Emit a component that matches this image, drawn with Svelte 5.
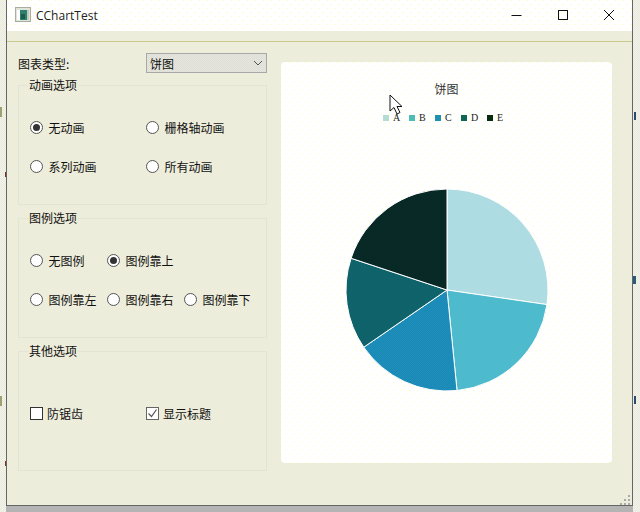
<script>
  const animOptions = [
    { label: '无动画', on: true },
    { label: '栅格轴动画', on: false },
    { label: '系列动画', on: false },
    { label: '所有动画', on: false }
  ];
  const legendOptions = [
    { label: '无图例', on: false },
    { label: '图例靠上', on: true },
    { label: '', on: false, blank: true },
    { label: '图例靠左', on: false },
    { label: '图例靠右', on: false },
    { label: '图例靠下', on: false }
  ];
  const otherOptions = [
    { label: '防锯齿', on: false },
    { label: '显示标题', on: true }
  ];

  // end angle of each slice, clockwise from 12 o'clock
  const slices = [
    { name: 'A', end: 98.3, c1: '#a8dcf5', c2: '#b5dcd0' },
    { name: 'B', end: 174.3, c1: '#4cb8e4', c2: '#4fbcb5' },
    { name: 'C', end: 235.5, c1: '#1a88c0', c2: '#2090b0' },
    { name: 'D', end: 288.3, c1: '#0f5f80', c2: '#0f6655' },
    { name: 'E', end: 360, c1: '#06283c', c2: '#0a2a10' }
  ];

  // bits of the desktop showing either side of the window
  const marks = [
    { x: 0, y: 107, w: 2, h: 10, c: '#a0a070' },
    { x: 0, y: 396, w: 2, h: 10, c: '#a0a070' },
    { x: 5, y: 172, w: 1, h: 5, c: '#7a3030' },
    { x: 5, y: 461, w: 1, h: 5, c: '#7a3030' },
    { x: 634, y: 112, w: 2, h: 8, c: '#2a4a70' },
    { x: 633, y: 276, w: 3, h: 8, c: '#2a5a80' },
    { x: 634, y: 396, w: 2, h: 8, c: '#2a4a70' }
  ];

  const cx = 166, cy = 166, r = 101;

  function point(deg) {
    const a = (deg * Math.PI) / 180;
    return (cx + r * Math.sin(a)).toFixed(2) + ' ' + (cy - r * Math.cos(a)).toFixed(2);
  }

  function slicePath(i) {
    const start = i === 0 ? 0 : slices[i - 1].end;
    const end = slices[i].end;
    const large = end - start > 180 ? 1 : 0;
    return `M${cx} ${cy}L${point(start)}A${r} ${r} 0 ${large} 1 ${point(end - 0.001)}Z`;
  }
</script>

<div class="desktop">
  {#each marks as m}
    <span class="mark" style="left: {m.x}px; top: {m.y}px; width: {m.w}px; height: {m.h}px; background: {m.c}"></span>
  {/each}

  <div class="window">
    <header class="titlebar">
      <svg class="appicon" width="16" height="16" viewBox="0 0 16 16">
        <rect x="0.5" y="0.5" width="15" height="14" fill="#dfe3d8" stroke="#a9ad9f" />
        <rect x="2" y="3" width="3" height="10" fill="#fff" />
        <rect x="5" y="3" width="7" height="10" fill="#2f7f6f" />
        <rect x="6" y="7" width="4" height="5" fill="#1c5a4c" />
        <rect x="12" y="3" width="2" height="10" fill="#c4c8b8" />
      </svg>
      <span class="wintitle">CChartTest</span>
      <div class="winbtns">
        <svg width="46" height="20" viewBox="0 0 46 20"><path d="M17.5 10.500h10" stroke="#111" fill="none" /></svg>
        <svg width="46" height="20" viewBox="0 0 46 20"><rect x="18.5" y="5.5" width="9" height="9" stroke="#111" fill="none" /></svg>
        <svg width="46" height="20" viewBox="0 0 46 20"><path d="M18 5l10 10M28 5l-10 10" stroke="#111" fill="none" /></svg>
      </div>
    </header>
    <div class="menubar"></div>

    <div class="content">
      <div class="leftcol">
        <div class="typerow">
          <span class="typelabel">图表类型:</span>
          <div class="combo">
            <span>饼图</span>
            <svg width="10" height="6" viewBox="0 0 10 6"><path d="M1 1l4 4 4-4" stroke="#555" fill="none" /></svg>
          </div>
        </div>

        <fieldset>
          <legend>动画选项</legend>
          <div class="opts two">
            {#each animOptions as opt}
              <div class="opt">
                <span class="radio" class:on={opt.on}></span>
                <span>{opt.label}</span>
              </div>
            {/each}
          </div>
        </fieldset>

        <fieldset>
          <legend>图例选项</legend>
          <div class="opts three">
            {#each legendOptions as opt}
              {#if opt.blank}
                <div></div>
              {:else}
                <div class="opt">
                  <span class="radio" class:on={opt.on}></span>
                  <span>{opt.label}</span>
                </div>
              {/if}
            {/each}
          </div>
        </fieldset>

        <fieldset>
          <legend>其他选项</legend>
          <div class="opts two checks">
            {#each otherOptions as opt}
              <div class="opt">
                <span class="check" class:on={opt.on}>
                  {#if opt.on}
                    <svg width="11" height="11" viewBox="0 0 11 11"><path d="M1.5 5.5l3 3 5-7" stroke="#555" stroke-width="1.2" fill="none" /></svg>
                  {/if}
                </span>
                <span>{opt.label}</span>
              </div>
            {/each}
          </div>
        </fieldset>
      </div>

      <div class="card">
        <div class="charttitle">饼图</div>
        <div class="legend">
          {#each slices as s}
            <div class="legenditem">
              <span class="swatch" style="background: {s.c2}"></span>
              <span>{s.name}</span>
            </div>
          {/each}
        </div>
        <svg class="pie" width="331" height="280" viewBox="0 0 331 280">
          <defs>
            {#each slices as s}
              <pattern id="dither{s.name}" width="2" height="2" patternUnits="userSpaceOnUse">
                <rect width="2" height="2" fill={s.c2} />
                <rect width="1" height="1" fill={s.c1} />
                <rect x="1" y="1" width="1" height="1" fill={s.c1} />
              </pattern>
            {/each}
          </defs>
          {#each slices as s, i}
            <path d={slicePath(i)} fill="url(#dither{s.name})" stroke="#fff" stroke-width="1" />
          {/each}
        </svg>
      </div>
    </div>
    <svg class="grip" width="12" height="12" viewBox="0 0 12 12">
      <path d="M9 2h2v2H9zM5 6h2v2H5zM9 6h2v2H9zM1 10h2v2H1zM5 10h2v2H5zM9 10h2v2H9z" fill="#a9a9a9" />
    </svg>
  </div>

  <svg class="cursor" width="14" height="22" viewBox="0 0 14 22">
    <path d="M1 1v16l4-3.500 3 6.500 3-1.500-3-6h5z" fill="#fff" stroke="#111" stroke-width="1" />
  </svg>
</div>

<style>
  :global(body) {
    margin: 0;
  }

  .desktop {
    position: relative;
    width: 640px;
    height: 512px;
    overflow: hidden;
    background: repeating-conic-gradient(#f6f6d8 0 25%, #e6e6ee 0 50%) 0 0 / 2px 2px;
    font-family: "Noto Sans CJK SC", "Noto Sans", sans-serif;
    font-size: 12px;
    color: #111;
  }

  .mark {
    position: absolute;
  }

  .window {
    position: relative;
    box-sizing: border-box;
    display: flex;
    flex-direction: column;
    margin-left: 6px;
    width: 627px;
    height: 506px;
    border: 1px solid #666;
    border-top: 0;
    box-shadow: 0 6px 0 #b4b4b4;
    background: repeating-conic-gradient(#f2f2c6 0 25%, #e8e8f0 0 50%) 0 0 / 2px 2px;
  }

  .titlebar {
    display: flex;
    align-items: center;
    height: 30px;
    flex: none;
    padding-left: 8px;
    padding-bottom: 1px;
    background:
      conic-gradient(at 1px 1px, transparent 75%, #ffffa8 0) 0 0 / 8px 8px,
      conic-gradient(at 1px 1px, transparent 75%, #ffffa8 0) 4px 4px / 8px 8px,
      #fff;
  }

  .wintitle {
    margin-left: 5px;
    font-family: "Open Sans", sans-serif;
    font-size: 12px;
    color: #222;
  }

  .winbtns {
    display: flex;
    margin-left: auto;
  }

  .menubar {
    flex: none;
    height: 10px;
    border-bottom: 1px solid #c9c98c;
  }

  .content {
    display: flex;
    flex: 1;
    gap: 14px;
    padding: 0 0 0 11px;
  }

  .leftcol {
    display: flex;
    flex-direction: column;
    gap: 6px;
    width: 249px;
    padding-top: 11px;
  }

  .typerow {
    display: flex;
    align-items: center;
    justify-content: space-between;
    height: 20px;
    margin-bottom: -1px;
  }

  .combo {
    box-sizing: border-box;
    display: flex;
    align-items: center;
    justify-content: space-between;
    width: 121px;
    height: 20px;
    padding: 0 3px 0 3px;
    border: 1px solid #a8a8a8;
    background: repeating-conic-gradient(#dcdcdc 0 25%, #e8e8d8 0 50%) 0 0 / 2px 2px;
  }

  fieldset {
    box-sizing: border-box;
    height: 127px;
    margin: 0;
    padding: 0;
    min-width: 0;
    border: 1px solid #e4e4d4;
  }

  legend {
    margin-left: 9px;
    padding: 0 1px;
    line-height: 14px;
  }

  .opts {
    display: grid;
    grid-auto-rows: 39px;
    padding: 16px 0 0 11px;
  }

  .two {
    grid-template-columns: 116px 116px;
  }

  .three {
    grid-template-columns: 77px 77px 77px;
  }

  .checks {
    padding-top: 36px;
  }

  .opt {
    display: flex;
    align-items: center;
    gap: 5.5px;
    white-space: nowrap;
  }

  .checks .opt {
    gap: 4px;
  }

  .radio {
    box-sizing: border-box;
    display: flex;
    align-items: center;
    justify-content: center;
    width: 13px;
    height: 13px;
    border: 1px solid #555;
    border-radius: 50%;
    background: #fff;
    flex: none;
  }

  .radio.on::after {
    content: "";
    width: 7px;
    height: 7px;
    border-radius: 50%;
    background: #333;
  }

  .check {
    box-sizing: border-box;
    display: flex;
    align-items: center;
    justify-content: center;
    width: 13px;
    height: 13px;
    border: 1px solid #333;
    background: #fff;
    flex: none;
  }

  .check.on {
    border-color: #666;
  }

  .card {
    width: 331px;
    height: 401px;
    margin-top: 20px;
    border-radius: 4px;
    text-align: center;
    background:
      conic-gradient(at 1px 1px, transparent 75%, #ffffa8 0) 0 0 / 8px 8px,
      conic-gradient(at 1px 1px, transparent 75%, #ffffa8 0) 4px 4px / 8px 8px,
      #fff;
  }

  .charttitle {
    margin-top: 19px;
    line-height: 16px;
    color: #333;
  }

  .legend {
    display: flex;
    justify-content: center;
    gap: 10px;
    margin-top: 15px;
    padding-right: 7px;
    font-family: "Liberation Serif", serif;
    font-size: 10px;
    line-height: 12px;
    color: #222;
  }

  .legenditem {
    display: flex;
    align-items: center;
    gap: 4px;
    width: 16px;
  }

  .swatch {
    width: 6px;
    height: 6px;
    flex: none;
  }

  .pie {
    display: block;
  }

  .grip {
    position: absolute;
    right: 1px;
    bottom: 0;
  }

  .cursor {
    position: absolute;
    left: 389px;
    top: 94px;
  }
</style>
